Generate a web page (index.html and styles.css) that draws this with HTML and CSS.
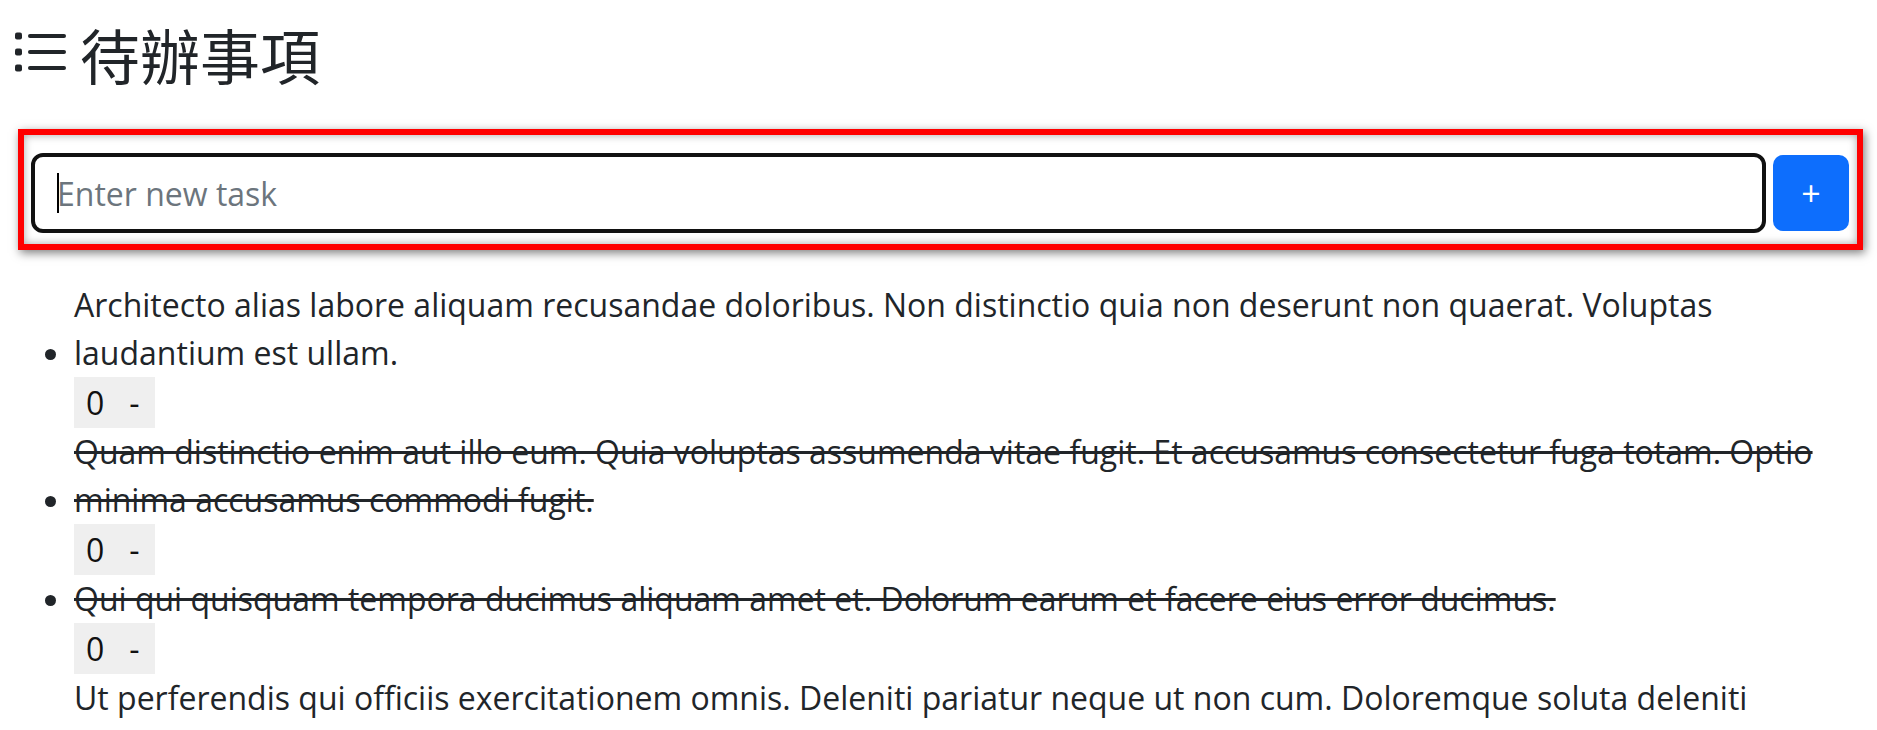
FILE: index.html
```html
<!DOCTYPE html>
<html lang="zh-Hant">
<head>
<meta charset="utf-8">
<title>待辦事項</title>
<link rel="stylesheet" href="styles.css">
</head>
<body>
<div class="page">
  <h2 class="title">
    <svg class="title-icon" width="60" height="64" viewBox="0 0 60 64" aria-hidden="true">
      <rect x="5" y="10.5" width="7" height="7" rx="2" fill="#212529"/>
      <rect x="5" y="26.5" width="7" height="7" rx="2" fill="#212529"/>
      <rect x="5" y="42.5" width="7" height="7" rx="2" fill="#212529"/>
      <g stroke="#212529" stroke-width="4" stroke-linecap="round">
        <line x1="20" y1="14" x2="54" y2="14"/>
        <line x1="20" y1="30" x2="54" y2="30"/>
        <line x1="20" y1="46" x2="54" y2="46"/>
      </g>
    </svg>
    <span>待辦事項</span>
  </h2>

  <form class="task-form">
    <div class="field">
      <input class="task-input" type="text" placeholder="Enter new task">
    </div>
    <button class="add-btn" type="button">+</button>
  </form>

  <ul class="task-list">
    <li>
      <span class="task-text">Architecto alias labore aliquam recusandae doloribus. Non distinctio quia non deserunt non quaerat. Voluptas laudantium est ullam.</span>
      <div class="controls"><button type="button" class="count">0</button><button type="button" class="minus">-</button></div>
    </li>
    <li>
      <span class="task-text done">Quam distinctio enim aut illo eum. Quia voluptas assumenda vitae fugit. Et accusamus consectetur fuga totam. Optio minima accusamus commodi fugit.</span>
      <div class="controls"><button type="button" class="count">0</button><button type="button" class="minus">-</button></div>
    </li>
    <li>
      <span class="task-text done">Qui qui quisquam tempora ducimus aliquam amet et. Dolorum earum et facere eius error ducimus.</span>
      <div class="controls"><button type="button" class="count">0</button><button type="button" class="minus">-</button></div>
    </li>
    <li>
      <span class="task-text">Ut perferendis qui officiis exercitationem omnis. Deleniti pariatur neque ut non cum. Doloremque soluta deleniti consequatur.</span>
      <div class="controls"><button type="button" class="count">0</button><button type="button" class="minus">-</button></div>
    </li>
  </ul>
</div>
</body>
</html>
```

FILE: styles.css
```css
html, body {
  margin: 0;
  padding: 0;
  background: #fff;
}

body {
  font-family: "Open Sans", "Noto Sans", sans-serif;
  font-size: 32px;
  line-height: 48px;
  color: #212529;
}

.page {
  padding: 18px 14px 0 10px;
}

.title {
  display: flex;
  align-items: center;
  gap: 10px;
  margin: 0;
  height: 72px;
  font-family: "Noto Sans CJK TC", "Noto Sans CJK SC", sans-serif;
  font-size: 60px;
  font-weight: 400;
  line-height: 72px;
  color: #212529;
}

.title-icon {
  display: block;
  flex: none;
}

.task-form {
  display: flex;
  align-items: center;
  gap: 7px;
  margin: 39px 0 31px 8px;
  padding: 18px 8px 11px 7px;
  border: 6px solid #ff0000;
  box-shadow: 2px 3px 9px rgba(0, 0, 0, 0.5), inset 0 0 9px rgba(0, 0, 0, 0.35);
}

.field {
  position: relative;
  flex: 1;
  display: flex;
}

.field::after {
  content: "";
  position: absolute;
  left: 26px;
  top: 20px;
  width: 2px;
  height: 40px;
  background: #000;
}

.task-input {
  flex: 1;
  box-sizing: border-box;
  height: 80px;
  margin: 0;
  padding: 0 0 0 22px;
  border: 4px solid #111;
  border-radius: 12px;
  outline: none;
  font-family: inherit;
  font-size: 32px;
  color: #212529;
  background: #fff;
}

.task-input::placeholder {
  color: #6c757d;
  opacity: 1;
}

.add-btn {
  flex: none;
  width: 76px;
  height: 76px;
  margin: 0;
  padding: 0;
  border: 0;
  border-radius: 10px;
  background: #0d6efd;
  color: #fff;
  font-family: inherit;
  font-size: 34px;
  line-height: 76px;
}

.task-list {
  margin: 0;
  padding: 0 3px 0 64px;
}

.task-text {
  display: inline-block;
}

.done {
  text-decoration: line-through;
  text-decoration-thickness: 3px;
}

.controls {
  display: flex;
}

.controls button {
  margin: 0;
  padding: 2px 12px;
  border: 0;
  border-radius: 0;
  background: #efefef;
  color: #111;
  font-family: inherit;
  font-size: 32px;
  line-height: 47px;
}

.controls .minus {
  padding-left: 13px;
  padding-right: 15px;
}
```
